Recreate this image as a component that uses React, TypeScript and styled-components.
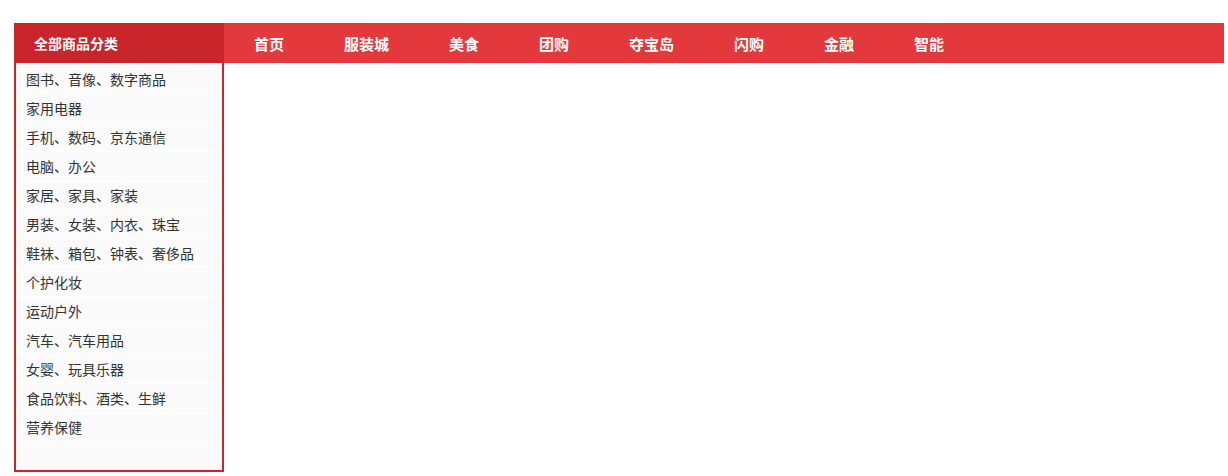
import React from "react";
import styled, { createGlobalStyle } from "styled-components";

const Global = createGlobalStyle`
  html, body { margin: 0; padding: 0; background: #fff; }
  body { font-family: "Noto Sans CJK SC", "Noto Sans", sans-serif; }
  * { box-sizing: border-box; }
`;

const Page = styled.div`
  padding: 23px 0 0 14px;
`;

const Wrap = styled.div`
  width: 1210px;
`;

const NavBar = styled.div`
  display: flex;
  height: 40px;
  background: #e4393c;
`;

const CatHeader = styled.div`
  width: 210px;
  flex: none;
  background: #c9252b;
  color: #fff;
  font-size: 14px;
  font-weight: 700;
  padding-left: 20px;
  display: flex;
  align-items: center;
`;

const NavList = styled.ul`
  display: flex;
  margin: 0;
  padding: 0;
  list-style: none;
`;

const NavItem = styled.li`
  padding: 0 30px;
  color: #fff;
  font-size: 15px;
  font-weight: 700;
  display: flex;
  align-items: center;
  height: 40px;
  letter-spacing: 0;
`;

const CatList = styled.ul`
  width: 210px;
  height: 409px;
  margin: 0;
  padding: 2px 0 0;
  list-style: none;
  background: #fafafa;
  border: 2px solid #c9252b;
  border-top: none;
`;

const CatItem = styled.li`
  height: 29px;
  padding-left: 10px;
  display: flex;
  align-items: center;
  font-size: 14px;
  color: #333;
  border-bottom: 1px solid #fff;
`;

const navs = ["首页", "服装城", "美食", "团购", "夺宝岛", "闪购", "金融", "智能"];
const cats = [
  "图书、音像、数字商品",
  "家用电器",
  "手机、数码、京东通信",
  "电脑、办公",
  "家居、家具、家装",
  "男装、女装、内衣、珠宝",
  "鞋袜、箱包、钟表、奢侈品",
  "个护化妆",
  "运动户外",
  "汽车、汽车用品",
  "女婴、玩具乐器",
  "食品饮料、酒类、生鲜",
  "营养保健",
];

export default function App() {
  return (
    <Page>
      <Global />
      <Wrap>
        <NavBar>
          <CatHeader>全部商品分类</CatHeader>
          <NavList>
            {navs.map((n) => (
              <NavItem key={n}>{n}</NavItem>
            ))}
          </NavList>
        </NavBar>
        <CatList>
          {cats.map((c) => (
            <CatItem key={c}>{c}</CatItem>
          ))}
        </CatList>
      </Wrap>
    </Page>
  );
}
